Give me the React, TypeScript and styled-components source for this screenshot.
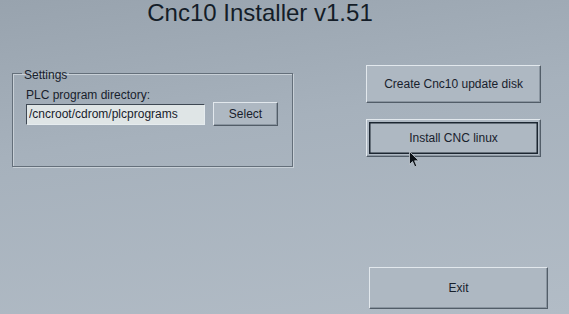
import styled, { createGlobalStyle } from 'styled-components';

const GlobalStyle = createGlobalStyle`
  html, body {
    margin: 0;
    padding: 0;
    background: #a9b4be;
  }
  body {
    font-family: "Liberation Sans", Arial, sans-serif;
  }
`;

const Screen = styled.div`
  position: relative;
  width: 569px;
  height: 314px;
  overflow: hidden;
  display: flex;
  flex-direction: column;
  background: linear-gradient(172deg, #98a3ae 0%, #a6b1bc 40%, #b2bcc6 100%);
  color: #18212c;
`;

const Title = styled.h1`
  margin: 0;
  height: 24px;
  padding-right: 49px;
  font-size: 24px;
  line-height: 26px;
  font-weight: normal;
  text-align: center;
  color: #141d28;
`;

const Body = styled.div`
  flex: 1;
  display: flex;
  padding: 0 0 5px 12px;
`;

const Group = styled.fieldset`
  box-sizing: border-box;
  align-self: flex-start;
  margin: 39px 0 0;
  width: 281px;
  height: 104px;
  padding: 0 13px;
  border: 1px solid #646f7a;
  box-shadow: inset 1px 1px 0 #c8d0d7, 1px 1px 0 #c8d0d7;
  min-inline-size: 0;
`;

const Legend = styled.legend`
  margin-left: -4px;
  padding: 4px 2px 0;
  font-size: 12px;
  line-height: 16px;
`;

const FieldLabel = styled.div`
  margin-top: 5px;
  font-size: 12px;
  line-height: 14px;
`;

const FieldRow = styled.div`
  display: flex;
  align-items: center;
  gap: 8px;
`;

const PathInput = styled.input`
  box-sizing: border-box;
  width: 179px;
  height: 21px;
  padding: 0 2px;
  margin: 0;
  font-family: "Liberation Sans", Arial, sans-serif;
  font-size: 12px;
  color: #18212c;
  background: #dfe5e6;
  border: 1px solid;
  border-color: #3e4853 #e6ecef #e6ecef #3e4853;
  outline: none;
`;

const Button = styled.button<{ $w: number; $h: number; $focus?: boolean }>`
  box-sizing: border-box;
  width: ${p => p.$w}px;
  height: ${p => p.$h}px;
  margin: 0;
  padding: 0;
  font-family: "Liberation Sans", Arial, sans-serif;
  font-size: 12px;
  color: #18212c;
  background: #aeb8c2;
  border: 1px solid;
  border-color: #e2e8ed #525d68 #525d68 #e2e8ed;
  box-shadow: ${p =>
    p.$focus
      ? 'inset -1px -1px 0 #8a95a0, inset 0 0 0 2px #aeb8c2, inset 0 0 0 3.5px #1c2631'
      : 'inset -1px -1px 0 #8a95a0'};
  cursor: default;
`;

const Actions = styled.div`
  display: flex;
  flex-direction: column;
  align-items: flex-start;
  margin-left: 73px;
  padding-top: 41px;
`;

const ExitButton = styled(Button)`
  margin-top: auto;
  margin-left: 3px;
`;

const Pointer = styled.svg`
  position: absolute;
  left: 409px;
  top: 151px;
`;

export default function App() {
  return (
    <>
      <GlobalStyle />
      <Screen>
        <Title>Cnc10 Installer v1.51</Title>
        <Body>
          <Group>
            <Legend>Settings</Legend>
            <FieldLabel>PLC program directory:</FieldLabel>
            <FieldRow>
              <PathInput readOnly value="/cncroot/cdrom/plcprograms" />
              <Button $w={65} $h={24}>Select</Button>
            </FieldRow>
          </Group>
          <Actions>
            <Button $w={175} $h={38}>Create Cnc10 update disk</Button>
            <Button $w={175} $h={38} $focus style={{ marginTop: 16 }}>Install CNC linux</Button>
            <ExitButton $w={179} $h={42}>Exit</ExitButton>
          </Actions>
        </Body>
        <Pointer width="11" height="17" viewBox="0 0 11 17">
          <path d="M0.5 0.5 L0.5 13.5 L3.5 10.5 L5.8 15.8 L7.8 15 L5.6 9.8 L9.8 9.8 Z" fill="#0d1218" stroke="#c4ccd3" strokeWidth="0.8" />
        </Pointer>
      </Screen>
    </>
  );
}
